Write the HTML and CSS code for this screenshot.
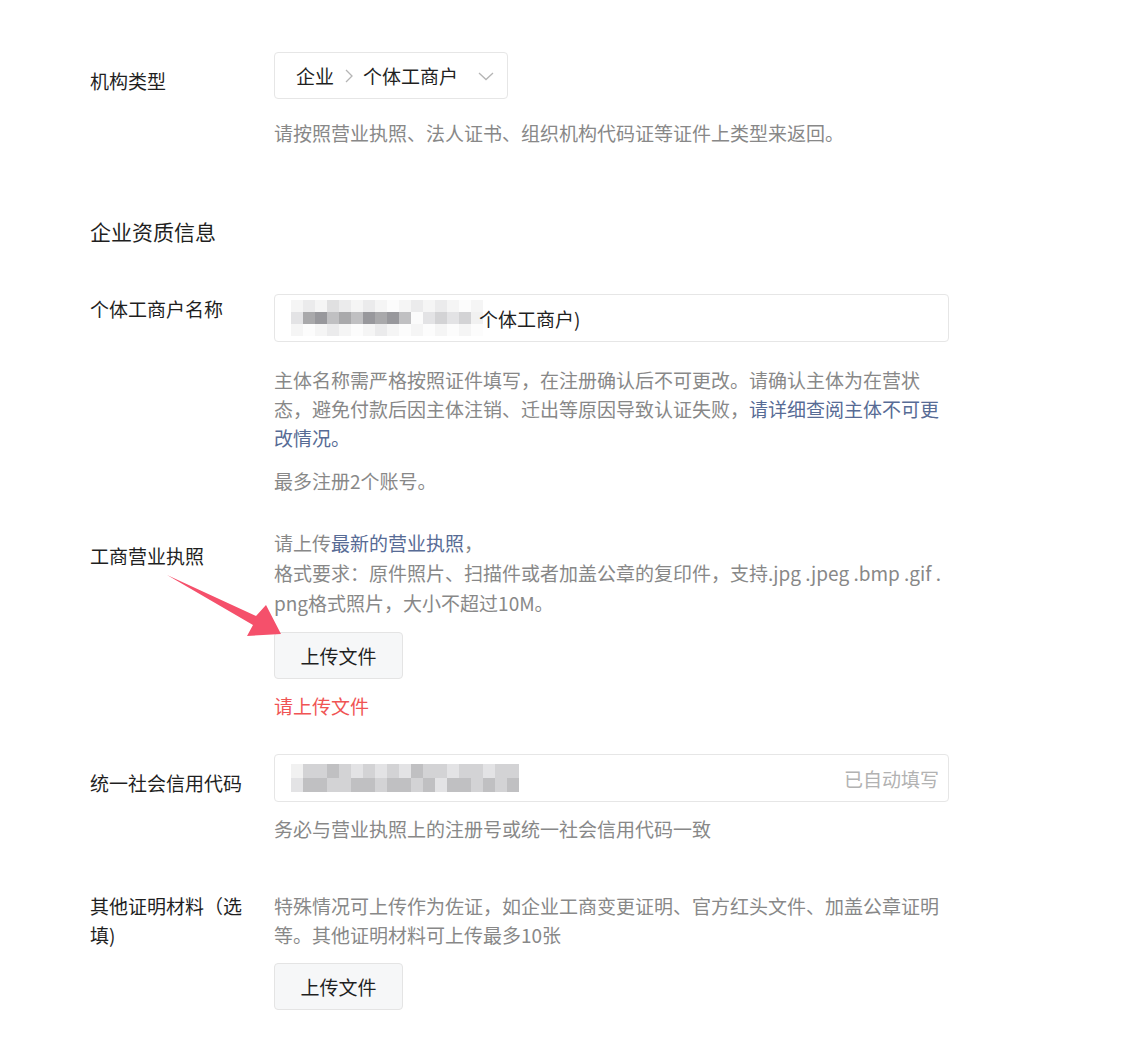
FILE: index.html
```html
<!DOCTYPE html>
<html lang="zh-CN">
<head>
  <meta charset="UTF-8" />
  <meta name="viewport" content="width=device-width, initial-scale=1" />
  <title>企业资质信息</title>
  <link rel="stylesheet" href="styles.css">
</head>
<body>

  <div class="page">
    <div class="form-row row-type">
      <div class="form-label">机构类型</div>
      <div class="form-field">
        <div class="select-box">
          <span>企业</span>
          <svg class="crumb-arrow" width="10" height="16" viewBox="0 0 10 16"><path d="M2 2 L8 8 L2 14" fill="none" stroke="#b5b5b5" stroke-width="1.3"/></svg>
          <span>个体工商户</span>
          <svg class="drop-arrow" width="16" height="10" viewBox="0 0 16 10"><path d="M1 2 L8 8.5 L15 2" fill="none" stroke="#b5b5b5" stroke-width="1.3"/></svg>
        </div>
        <p class="tips tips-first">请按照营业执照、法人证书、组织机构代码证等证件上类型来返回。</p>
      </div>
    </div>

    <h3 class="section-title">企业资质信息</h3>

    <div class="form-row row-name">
      <div class="form-label label-flat">个体工商户名称</div>
      <div class="form-field">
        <div class="input-box">
          <div class="mosaic mosaic-name">
            <div class="mosaic-line light"><i class="c1"></i><i class="c2"></i><i class="c1"></i><i class="c3"></i><i class="c2"></i><i class="c1"></i><i class="c2"></i><i class="c1"></i><i class="c0"></i><i class="c1"></i><i class="c2"></i><i class="c1"></i><i class="c2"></i><i class="c1"></i><i class="c0"></i><i class="c1"></i></div>
            <div class="mosaic-line"><i class="c2"></i><i class="c5"></i><i class="c6"></i><i class="c4"></i><i class="c5"></i><i class="c4"></i><i class="c6"></i><i class="c5"></i><i class="c6"></i><i class="c4"></i><i class="c0"></i><i class="c2"></i><i class="c3"></i><i class="c2"></i><i class="c3"></i><i class="c1"></i></div>
            <div class="mosaic-line light"><i class="c1"></i><i class="c0"></i><i class="c1"></i><i class="c2"></i><i class="c1"></i><i class="c0"></i><i class="c1"></i><i class="c2"></i><i class="c1"></i><i class="c0"></i><i class="c1"></i><i class="c0"></i><i class="c1"></i><i class="c0"></i><i class="c1"></i><i class="c0"></i></div>
          </div>
          <span class="input-text">个体工商户)</span>
        </div>
        <p class="tips tips-name">主体名称需严格按照证件填写，在注册确认后不可更改。请确认主体为在营状态，避免付款后因主体注销、迁出等原因导致认证失败，<a href="#" class="link">请详细查阅主体不可更改情况。</a></p>
        <p class="tips tips-count">最多注册2个账号。</p>
      </div>
    </div>

    <div class="form-row row-license">
      <div class="form-label label-low">工商营业执照</div>
      <div class="form-field">
        <p class="tips tips-break">请上传<a href="#" class="link">最新的营业执照</a>，<br>格式要求：原件照片、扫描件或者加盖公章的复印件，支持.jpg .jpeg .bmp .gif .png格式照片，大小不超过10M。</p>
        <button type="button" class="upload-btn">上传文件</button>
        <p class="error-msg">请上传文件</p>
      </div>
    </div>

    <div class="form-row row-code">
      <div class="form-label">统一社会信用代码</div>
      <div class="form-field">
        <div class="input-box">
          <div class="mosaic mosaic-code">
            <div class="mosaic-line"><i class="c1"></i><i class="c3"></i><i class="c3"></i><i class="c4"></i><i class="c3"></i><i class="c2"></i><i class="c3"></i><i class="c2"></i><i class="c3"></i><i class="c2"></i><i class="c4"></i><i class="c3"></i><i class="c3"></i><i class="c2"></i><i class="c3"></i><i class="c3"></i><i class="c2"></i><i class="c3"></i><i class="c3"></i></div>
            <div class="mosaic-line"><i class="c2"></i><i class="c4"></i><i class="c4"></i><i class="c3"></i><i class="c3"></i><i class="c4"></i><i class="c4"></i><i class="c3"></i><i class="c4"></i><i class="c4"></i><i class="c3"></i><i class="c4"></i><i class="c2"></i><i class="c4"></i><i class="c4"></i><i class="c3"></i><i class="c4"></i><i class="c3"></i><i class="c4"></i></div>
          </div>
          <span class="placeholder">已自动填写</span>
        </div>
        <p class="tips tips-code">务必与营业执照上的注册号或统一社会信用代码一致</p>
      </div>
    </div>

    <div class="form-row row-other">
      <div class="form-label label-flat">其他证明材料（选填)</div>
      <div class="form-field">
        <p class="tips">特殊情况可上传作为佐证，如企业工商变更证明、官方红头文件、加盖公章证明等。其他证明材料可上传最多10张</p>
        <button type="button" class="upload-btn">上传文件</button>
      </div>
    </div>
  </div>

  <svg class="pointer-arrow" width="140" height="80" viewBox="160 570 140 80">
    <polygon points="167,575 256,616 266,605 281,634 247,636 253,625" fill="#f5506b"/>
  </svg>

</body>
</html>
```

FILE: styles.css
```css
body {
  font-family: "Noto Sans CJK SC", "Noto Sans", sans-serif;
  background: #fff;
  margin: 0;
  padding: 0;
  color: #1f1f1f;
  font-size: 19px;
}

.page {
  position: relative;
  padding: 52px 0 40px 90px;
  width: 859px;
}

.form-row {
  display: flex;
  gap: 24px;
}

.form-label {
  width: 160px;
  flex-shrink: 0;
  line-height: 29px;
  padding-top: 14px;
}

.label-flat {
  padding-top: 0;
}

.label-low {
  padding-top: 13px;
}

.form-field {
  flex: 1;
  width: 674px;
}

/* select */
.select-box {
  display: inline-flex;
  align-items: center;
  height: 45px;
  padding: 0 13px 0 21px;
  border: 1px solid #e6e6e6;
  border-radius: 4px;
  line-height: 45px;
}

.crumb-arrow {
  margin: 0 9px 0 10px;
}

.drop-arrow {
  margin-left: 20px;
}

/* text input */
.input-box {
  display: flex;
  align-items: center;
  height: 46px;
  border: 1px solid #e6e6e6;
  border-radius: 4px;
  padding: 0 9px 0 16px;
}

.input-text {
  color: #1f1f1f;
  margin-left: -4px;
}

.placeholder {
  margin-left: auto;
  color: #b2b2b2;
}

/* blurred value */
.mosaic {
  display: flex;
  flex-direction: column;
}

.mosaic-line {
  display: flex;
  height: 12px;
}

.mosaic-line i {
  display: block;
  width: 12px;
  height: 100%;
}

.mosaic-code .mosaic-line {
  height: 14px;
}

.mosaic-line.light {
  opacity: 0.7;
}

.c0 { background: #fbfbfb; }
.c1 { background: #f1f1f1; }
.c2 { background: #e3e3e5; }
.c3 { background: #d3d3d5; }
.c4 { background: #c0c0c2; }
.c5 { background: #a9a9ab; }
.c6 { background: #98989c; }

/* helper text */
.tips {
  margin: 0;
  color: #888;
  line-height: 29px;
}

.tips-break {
  word-break: break-all;
  line-height: 30px;
}

.tips-first {
  margin-top: 19px;
}

.tips-name {
  margin-top: 23px;
}

.tips-count {
  margin-top: 14px;
}

.tips-code {
  margin-top: 12px;
}

.link {
  color: #576b95;
  text-decoration: none;
}

.section-title {
  margin: 69px 0 48px;
  font-size: 21px;
  font-weight: 400;
  line-height: 30px;
  color: #1f1f1f;
}

.upload-btn {
  display: block;
  margin-top: 14px;
  height: 47px;
  width: 129px;
  background: #f6f7f8;
  border: 1px solid #e4e4e4;
  border-radius: 4px;
  font-family: inherit;
  font-size: 19px;
  color: #1f1f1f;
  cursor: pointer;
}

.error-msg {
  margin: 12px 0 0;
  color: #f05454;
  line-height: 29px;
}

.row-license {
  margin-top: 33px;
}

.row-code {
  margin-top: 34px;
}

.row-other {
  margin-top: 48px;
}

/* annotation arrow over the page */
.pointer-arrow {
  position: absolute;
  left: 160px;
  top: 570px;
}
```
